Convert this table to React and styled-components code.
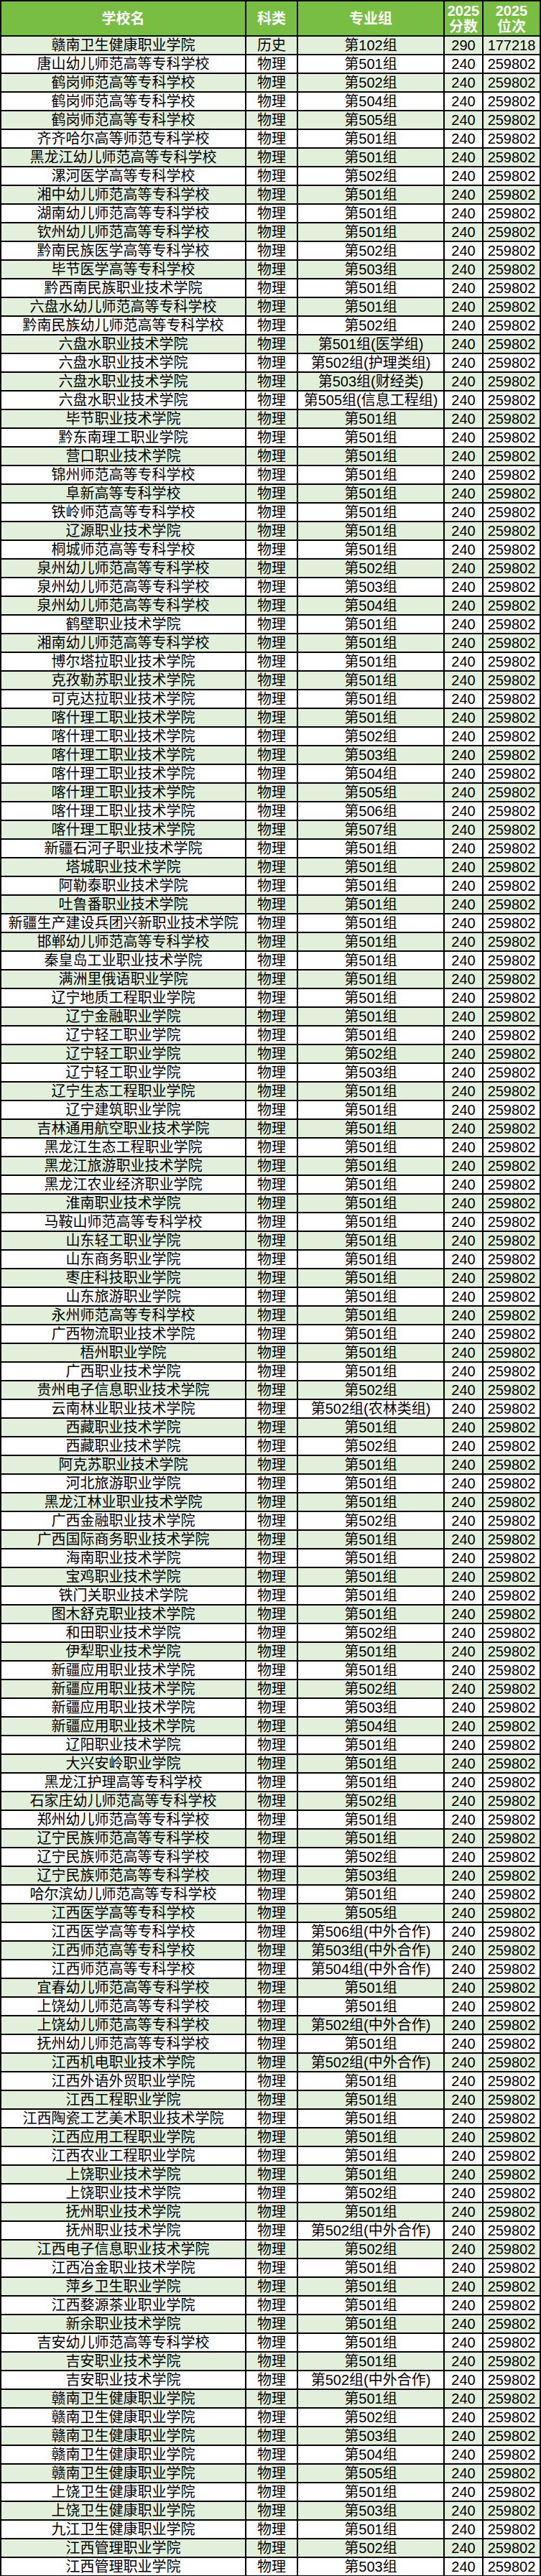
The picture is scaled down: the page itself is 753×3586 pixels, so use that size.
import React from "react";
import styled, { createGlobalStyle } from "styled-components";

const GlobalStyle = createGlobalStyle`
  html, body {
    margin: 0;
    padding: 0;
    background: #ffffff;
  }
  body {
    font-family: "Liberation Sans", "Noto Sans CJK SC", sans-serif;
  }
`;

const Sheet = styled.div`
  display: grid;
  grid-template-columns: 339px 70px 202px 52px 78px;
  grid-template-rows: 47px;
  grid-auto-rows: 24px;
  gap: 2px;
  width: 749px;
  border: 2px solid #000;
  background: #000;
`;

const HeadCell = styled.div`
  display: flex;
  flex-direction: column;
  align-items: center;
  justify-content: center;
  background: #78be43;
  color: #fff;
  font-weight: 700;
  font-size: 20px;
  line-height: 22px;
  text-align: center;
`;

const Cell = styled.div`
  display: flex;
  align-items: center;
  justify-content: center;
  background: ${({ $shade }) => ($shade ? "#e2efda" : "#ffffff")};
  color: #000;
  font-size: 20px;
  line-height: 24px;
  white-space: nowrap;
  overflow: hidden;
`;

const P = "物理";
const row = (name, group) => [name, P, group, "240", "259802"];

const rows = [
  ["赣南卫生健康职业学院", "历史", "第102组", "290", "177218"],
  row("唐山幼儿师范高等专科学校", "第501组"),
  row("鹤岗师范高等专科学校", "第502组"),
  row("鹤岗师范高等专科学校", "第504组"),
  row("鹤岗师范高等专科学校", "第505组"),
  row("齐齐哈尔高等师范专科学校", "第501组"),
  row("黑龙江幼儿师范高等专科学校", "第501组"),
  row("漯河医学高等专科学校", "第502组"),
  row("湘中幼儿师范高等专科学校", "第501组"),
  row("湖南幼儿师范高等专科学校", "第501组"),
  row("钦州幼儿师范高等专科学校", "第501组"),
  row("黔南民族医学高等专科学校", "第502组"),
  row("毕节医学高等专科学校", "第503组"),
  row("黔西南民族职业技术学院", "第501组"),
  row("六盘水幼儿师范高等专科学校", "第501组"),
  row("黔南民族幼儿师范高等专科学校", "第502组"),
  row("六盘水职业技术学院", "第501组(医学组)"),
  row("六盘水职业技术学院", "第502组(护理类组)"),
  row("六盘水职业技术学院", "第503组(财经类)"),
  row("六盘水职业技术学院", "第505组(信息工程组)"),
  row("毕节职业技术学院", "第501组"),
  row("黔东南理工职业学院", "第501组"),
  row("营口职业技术学院", "第501组"),
  row("锦州师范高等专科学校", "第501组"),
  row("阜新高等专科学校", "第501组"),
  row("铁岭师范高等专科学校", "第501组"),
  row("辽源职业技术学院", "第501组"),
  row("桐城师范高等专科学校", "第501组"),
  row("泉州幼儿师范高等专科学校", "第502组"),
  row("泉州幼儿师范高等专科学校", "第503组"),
  row("泉州幼儿师范高等专科学校", "第504组"),
  row("鹤壁职业技术学院", "第501组"),
  row("湘南幼儿师范高等专科学校", "第501组"),
  row("博尔塔拉职业技术学院", "第501组"),
  row("克孜勒苏职业技术学院", "第501组"),
  row("可克达拉职业技术学院", "第501组"),
  row("喀什理工职业技术学院", "第501组"),
  row("喀什理工职业技术学院", "第502组"),
  row("喀什理工职业技术学院", "第503组"),
  row("喀什理工职业技术学院", "第504组"),
  row("喀什理工职业技术学院", "第505组"),
  row("喀什理工职业技术学院", "第506组"),
  row("喀什理工职业技术学院", "第507组"),
  row("新疆石河子职业技术学院", "第501组"),
  row("塔城职业技术学院", "第501组"),
  row("阿勒泰职业技术学院", "第501组"),
  row("吐鲁番职业技术学院", "第501组"),
  row("新疆生产建设兵团兴新职业技术学院", "第501组"),
  row("邯郸幼儿师范高等专科学校", "第501组"),
  row("秦皇岛工业职业技术学院", "第501组"),
  row("满洲里俄语职业学院", "第501组"),
  row("辽宁地质工程职业学院", "第501组"),
  row("辽宁金融职业学院", "第501组"),
  row("辽宁轻工职业学院", "第501组"),
  row("辽宁轻工职业学院", "第502组"),
  row("辽宁轻工职业学院", "第503组"),
  row("辽宁生态工程职业学院", "第501组"),
  row("辽宁建筑职业学院", "第501组"),
  row("吉林通用航空职业技术学院", "第501组"),
  row("黑龙江生态工程职业学院", "第501组"),
  row("黑龙江旅游职业技术学院", "第501组"),
  row("黑龙江农业经济职业学院", "第501组"),
  row("淮南职业技术学院", "第501组"),
  row("马鞍山师范高等专科学校", "第501组"),
  row("山东轻工职业学院", "第501组"),
  row("山东商务职业学院", "第501组"),
  row("枣庄科技职业学院", "第501组"),
  row("山东旅游职业学院", "第501组"),
  row("永州师范高等专科学校", "第501组"),
  row("广西物流职业技术学院", "第501组"),
  row("梧州职业学院", "第501组"),
  row("广西职业技术学院", "第501组"),
  row("贵州电子信息职业技术学院", "第502组"),
  row("云南林业职业技术学院", "第502组(农林类组)"),
  row("西藏职业技术学院", "第501组"),
  row("西藏职业技术学院", "第502组"),
  row("阿克苏职业技术学院", "第501组"),
  row("河北旅游职业学院", "第501组"),
  row("黑龙江林业职业技术学院", "第501组"),
  row("广西金融职业技术学院", "第502组"),
  row("广西国际商务职业技术学院", "第501组"),
  row("海南职业技术学院", "第501组"),
  row("宝鸡职业技术学院", "第501组"),
  row("铁门关职业技术学院", "第501组"),
  row("图木舒克职业技术学院", "第501组"),
  row("和田职业技术学院", "第502组"),
  row("伊犁职业技术学院", "第501组"),
  row("新疆应用职业技术学院", "第501组"),
  row("新疆应用职业技术学院", "第502组"),
  row("新疆应用职业技术学院", "第503组"),
  row("新疆应用职业技术学院", "第504组"),
  row("辽阳职业技术学院", "第501组"),
  row("大兴安岭职业学院", "第501组"),
  row("黑龙江护理高等专科学校", "第501组"),
  row("石家庄幼儿师范高等专科学校", "第502组"),
  row("郑州幼儿师范高等专科学校", "第501组"),
  row("辽宁民族师范高等专科学校", "第501组"),
  row("辽宁民族师范高等专科学校", "第502组"),
  row("辽宁民族师范高等专科学校", "第503组"),
  row("哈尔滨幼儿师范高等专科学校", "第501组"),
  row("江西医学高等专科学校", "第505组"),
  row("江西医学高等专科学校", "第506组(中外合作)"),
  row("江西师范高等专科学校", "第503组(中外合作)"),
  row("江西师范高等专科学校", "第504组(中外合作)"),
  row("宜春幼儿师范高等专科学校", "第501组"),
  row("上饶幼儿师范高等专科学校", "第501组"),
  row("上饶幼儿师范高等专科学校", "第502组(中外合作)"),
  row("抚州幼儿师范高等专科学校", "第501组"),
  row("江西机电职业技术学院", "第502组(中外合作)"),
  row("江西外语外贸职业学院", "第501组"),
  row("江西工程职业学院", "第501组"),
  row("江西陶瓷工艺美术职业技术学院", "第501组"),
  row("江西应用工程职业学院", "第501组"),
  row("江西农业工程职业学院", "第501组"),
  row("上饶职业技术学院", "第501组"),
  row("上饶职业技术学院", "第502组"),
  row("抚州职业技术学院", "第501组"),
  row("抚州职业技术学院", "第502组(中外合作)"),
  row("江西电子信息职业技术学院", "第502组"),
  row("江西冶金职业技术学院", "第501组"),
  row("萍乡卫生职业学院", "第501组"),
  row("江西婺源茶业职业学院", "第501组"),
  row("新余职业技术学院", "第501组"),
  row("吉安幼儿师范高等专科学校", "第501组"),
  row("吉安职业技术学院", "第501组"),
  row("吉安职业技术学院", "第502组(中外合作)"),
  row("赣南卫生健康职业学院", "第501组"),
  row("赣南卫生健康职业学院", "第502组"),
  row("赣南卫生健康职业学院", "第503组"),
  row("赣南卫生健康职业学院", "第504组"),
  row("赣南卫生健康职业学院", "第505组"),
  row("上饶卫生健康职业学院", "第501组"),
  row("上饶卫生健康职业学院", "第503组"),
  row("九江卫生健康职业学院", "第501组"),
  row("江西管理职业学院", "第502组"),
  row("江西管理职业学院", "第503组"),
];

export default function App() {
  return (
    <>
      <GlobalStyle />
      <Sheet>
        <HeadCell>学校名</HeadCell>
        <HeadCell>科类</HeadCell>
        <HeadCell>专业组</HeadCell>
        <HeadCell>
          <span>2025</span>
          <span>分数</span>
        </HeadCell>
        <HeadCell>
          <span>2025</span>
          <span>位次</span>
        </HeadCell>
        {rows.map((r, i) =>
          r.map((v, j) => (
            <Cell key={`${i}-${j}`} $shade={i % 2 === 0}>
              {v}
            </Cell>
          ))
        )}
      </Sheet>
    </>
  );
}
